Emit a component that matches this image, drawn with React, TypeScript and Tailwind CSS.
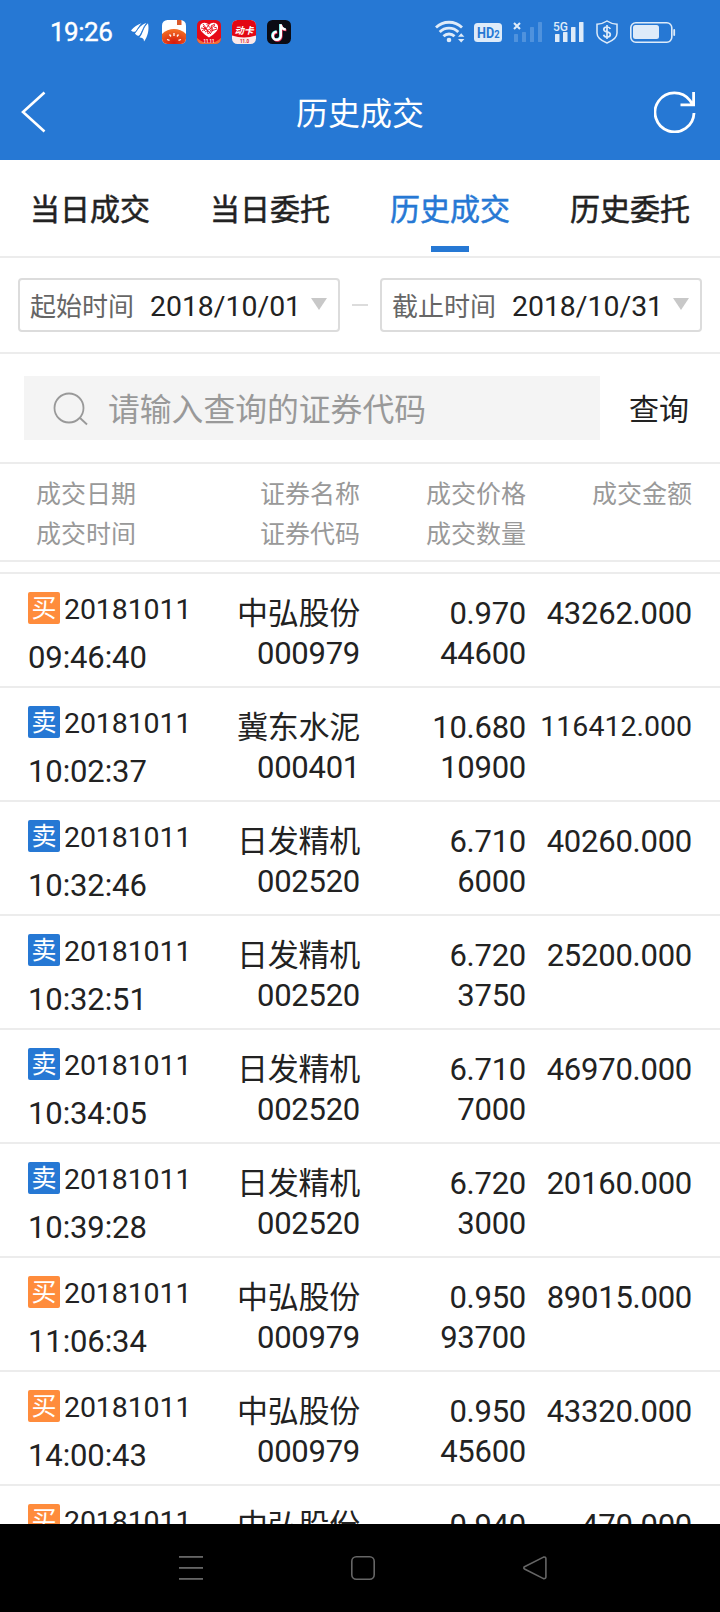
import React from "react";

type Trade = {
  side: "buy" | "sell";
  date: string;
  time: string;
  name: string;
  code: string;
  price: string;
  qty: string;
  amount: string;
};

const trades: Trade[] = [
  { side: "buy", date: "20181011", time: "09:46:40", name: "中弘股份", code: "000979", price: "0.970", qty: "44600", amount: "43262.000" },
  { side: "sell", date: "20181011", time: "10:02:37", name: "冀东水泥", code: "000401", price: "10.680", qty: "10900", amount: "116412.000" },
  { side: "sell", date: "20181011", time: "10:32:46", name: "日发精机", code: "002520", price: "6.710", qty: "6000", amount: "40260.000" },
  { side: "sell", date: "20181011", time: "10:32:51", name: "日发精机", code: "002520", price: "6.720", qty: "3750", amount: "25200.000" },
  { side: "sell", date: "20181011", time: "10:34:05", name: "日发精机", code: "002520", price: "6.710", qty: "7000", amount: "46970.000" },
  { side: "sell", date: "20181011", time: "10:39:28", name: "日发精机", code: "002520", price: "6.720", qty: "3000", amount: "20160.000" },
  { side: "buy", date: "20181011", time: "11:06:34", name: "中弘股份", code: "000979", price: "0.950", qty: "93700", amount: "89015.000" },
  { side: "buy", date: "20181011", time: "14:00:43", name: "中弘股份", code: "000979", price: "0.950", qty: "45600", amount: "43320.000" },
  { side: "buy", date: "20181011", time: "14:01:12", name: "中弘股份", code: "000979", price: "0.940", qty: "500", amount: "470.000" },
];

const tabs = ["当日成交", "当日委托", "历史成交", "历史委托"];

function StatusBar() {
  return (
    <div className="flex h-16 items-center pl-[50px] pr-[44px]">
      <span className="w-[81px] text-[26px] leading-8 tracking-[-0.5px] text-white [-webkit-text-stroke:0.4px_#fff]">19:26</span>
      <svg className="mr-[12px]" width="19" height="24" viewBox="0 0 19 24" fill="#fff">
        <path d="M0 10.500C3 7 6.500 4.500 10.500 3.200C7.500 6.500 6.500 8.500 4.500 11.500C3 12 1.500 12 0 10.500Z" />
        <path d="M4 13.500C7 9 9.500 5 15.500 3C12 7 11 12.500 8 15.800C6.500 15.800 5 15 4 13.500Z" />
        <path d="M8.500 17.500C12 14 12 7.500 17 3.200C18.500 10 16.500 17 13 21.500C13 18.500 11.500 17.500 8.500 17.500Z" />
        <path d="M10.500 3.500L4.300 12.800M15.800 3.200C11.500 7 11.500 13 8.200 16.700" stroke="#2678d4" strokeWidth="0.600" fill="none" />
      </svg>
      <svg className="mr-[11px]" width="24" height="24" viewBox="0 0 24 24">
        <defs>
          <radialGradient id="sun" cx="0.5" cy="0.9" r="0.8">
            <stop offset="0" stopColor="#d6190c" />
            <stop offset="1" stopColor="#f26a23" />
          </radialGradient>
          <clipPath id="app"><rect width="24" height="24" rx="5.500" /></clipPath>
        </defs>
        <g clipPath="url(#app)">
          <rect width="24" height="24" fill="#fff" />
          <rect x="15" width="4.500" height="5" fill="#d95a2b" />
          <path d="M0 24V14C3 10.500 8 9 12 9S21 10.500 24 14V24Z" fill="url(#sun)" />
          <path d="M12 13v3M7.500 14.500l1.500 2M16.500 14.500l-1.500 2M5 19.500l2.500.8M19 19.500l-2.500.8" stroke="#fff" strokeWidth="1.300" />
        </g>
      </svg>
      <svg className="mr-[11px]" width="24" height="24" viewBox="0 0 24 24">
        <g clipPath="url(#app)">
          <rect width="24" height="24" fill="#e60a17" />
          <path d="M0 18C3 21 8 23 12 23S21 21 24 18V24H0Z" fill="#f0703a" />
          <path d="M12 17.500C6 13.500 2.500 10.500 3 6.500C3.500 2.500 9 1.500 12 5C15 1.500 20.500 2.500 21 6.500C21.500 10.500 18 13.500 12 17.500Z" fill="#fff" />
          <path d="M6 4l3 4-4 3M9.500 4l5 5-3 5M18 4l-4 2 2 4-3 4M4 8l6 1 1 5M20 9l-6 2M8 12l5-3 5-4M6 6l8 8M12 5l-5 6M17 7l3 1" stroke="#e60a17" strokeWidth="0.900" fill="none" />
          <text x="12" y="22.800" fontSize="5.500" fontWeight="700" fill="#fff" textAnchor="middle" textLength="11" lengthAdjust="spacingAndGlyphs" fontFamily="Roboto, sans-serif">11.11</text>
        </g>
      </svg>
      <svg className="mr-[11px]" width="24" height="24" viewBox="0 0 24 24">
        <g clipPath="url(#app)">
          <rect width="24" height="24" fill="#fbe9e9" />
          <path d="M0 0H24V15.500C16 18 8 18 0 15.500Z" fill="#e30613" />
          <text x="12" y="13.500" fontSize="9.500" fontWeight="700" fill="#fff" textAnchor="middle" fontStyle="italic" fontFamily="'Noto Sans CJK SC', sans-serif">动卡</text>
          <text x="12.500" y="22.800" fontSize="5.500" fontWeight="700" fill="#d8202a" textAnchor="middle" textLength="9" lengthAdjust="spacingAndGlyphs" fontFamily="Roboto, sans-serif">11.0</text>
        </g>
      </svg>
      <svg width="24" height="24" viewBox="0 0 24 24">
        <rect width="24" height="24" rx="5.500" fill="#0b0b14" />
        <g fill="none" strokeWidth="2.400">
          <path d="M13.200 4v11.500a4 4 0 1 1-4-4M13.200 5c.6 2.500 2.300 4 5 4.100" stroke="#3ee6e0" />
          <path d="M14.400 5v11.500a4 4 0 1 1-4-4M14.400 6c.6 2.500 2.300 4 5 4.100" stroke="#f4335a" />
          <path d="M13.800 4.300v11.500a4 4 0 1 1-4-4M13.800 5.300c.6 2.500 2.300 4 5 4.100" stroke="#fff" />
        </g>
      </svg>

      <svg className="ml-auto mr-[9px]" width="30" height="24" viewBox="0 0 30 24">
        <g fill="none" stroke="#deebf9" strokeWidth="2.800">
          <path d="M1 7.600A18.500 18.500 0 0 1 27 7.600" />
          <path d="M4.700 12.100A13 13 0 0 1 23.300 12.100" />
          <path d="M8.500 16.300A7.700 7.700 0 0 1 19.500 16.300" />
        </g>
        <circle cx="14" cy="20" r="2.300" fill="#deebf9" />
        <path d="M23 16.800L26.200 13.300L29.400 16.800ZM23 19L26.200 22.500L29.400 19Z" fill="#deebf9" />
      </svg>
      <svg className="mr-[11px]" width="28" height="24" viewBox="0 0 28 24">
        <rect y="3" width="28" height="19" rx="3.500" fill="#deebf9" />
        <text x="3" y="18" fontSize="15" fontWeight="700" fill="#2678d4" textLength="22.500" lengthAdjust="spacingAndGlyphs" fontFamily="Roboto, sans-serif">
          HD<tspan fontSize="11">2</tspan>
        </text>
      </svg>
      <svg className="mr-[11px]" width="29" height="24" viewBox="0 0 29 24">
        <path d="M1 3l6 6M7 3l-6 6" stroke="#deebf9" strokeWidth="2.100" />
        <g fill="#4f92dd">
          <rect x="1" y="14" width="4" height="8" rx=".6" />
          <rect x="9" y="12" width="4" height="10" rx=".6" />
          <rect x="17" y="7" width="4" height="15" rx=".6" />
          <rect x="25" y="2" width="4" height="20" rx=".6" />
        </g>
      </svg>
      <svg className="mr-[12px] overflow-visible" width="31" height="24" viewBox="0 0 31 24">
        <text x="0" y="11" fontSize="13.500" fontWeight="500" fill="#deebf9" textLength="15" lengthAdjust="spacingAndGlyphs" fontFamily="Roboto, sans-serif">5G</text>
        <g fill="#deebf9">
          <rect x="2" y="14" width="4.500" height="8" rx=".6" />
          <rect x="10" y="12" width="4.500" height="10" rx=".6" />
          <rect x="18" y="7" width="4.500" height="15" rx=".6" />
          <rect x="26" y="2" width="4.500" height="20" rx=".6" />
        </g>
      </svg>
      <svg className="mr-[12px]" width="22" height="24" viewBox="0 0 22 24">
        <path d="M11 1C8 3 4.500 4 1 4.300V13C1 18 6 21 11 23C16 21 21 18 21 13V4.300C17.500 4 14 3 11 1Z" fill="none" stroke="#deebf9" strokeWidth="1.500" />
        <path d="M14.300 9C13.800 7.600 12.600 7 11 7C9.200 7 7.800 7.800 7.800 9.400C7.800 12.800 14.300 11 14.300 14.500C14.300 16.200 12.800 17 11 17C9.200 17 8 16.200 7.600 14.700M11 5v14" fill="none" stroke="#deebf9" strokeWidth="1.700" />
      </svg>
      <svg width="46" height="24" viewBox="0 0 46 24">
        <rect x=".8" y="2.800" width="41" height="19.400" rx="5" fill="none" stroke="#deebf9" strokeWidth="1.600" />
        <rect x="3" y="5" width="26" height="14" rx="2.500" fill="#deebf9" />
        <rect x="43.300" y="9" width="1.800" height="7" rx=".9" fill="#deebf9" />
      </svg>
    </div>
  );
}

function DateBox({ label, value }: { label: string; value: string }) {
  return (
    <div className="flex h-[54px] w-[322px] items-center rounded-[4px] border-2 border-[#dcdcdc] pl-[10px]">
      <span className="w-[120px] pt-[3px] text-[26px] leading-8 text-[#666]">{label}</span>
      <span className="w-[161px] pt-[3px] text-[28.4px] leading-8 text-[#222]">{value}</span>
      <svg className="-mt-[3px]" width="16" height="12" viewBox="0 0 16 12" fill="#c8c8c8">
        <path d="M0 0H16L8 12Z" />
      </svg>
    </div>
  );
}

function TradeRow({ t }: { t: Trade }) {
  const small = t.amount.length > 9;
  return (
    <div className="flex h-[114px] shrink-0 border-b-2 border-[#ececec] text-[31px] leading-10 tracking-[-0.25px] text-[#222]">
      <div className="w-[200px] pl-7 pt-[18px]">
        <div className="flex h-8 items-center">
          <span
            className={
              t.side === "buy"
                ? "flex size-8 items-center justify-center rounded-[2px] bg-[#ff8c3c] pt-[1px] text-[25px] leading-8 text-white"
                : "flex size-8 items-center justify-center rounded-[2px] bg-[#2678d4] pt-[1px] text-[25px] leading-8 text-white"
            }
          >
            {t.side === "buy" ? "买" : "卖"}
          </span>
          <span className="ml-1 pt-[3px] text-[28.500px] leading-8 tracking-[-0.1px]">{t.date}</span>
        </div>
        <div className="pt-[14px] tracking-[-0.1px]">{t.time}</div>
      </div>
      <div className="w-[160px] pt-[20px] text-right">
        <div className="h-10">{t.name}</div>
        <div>{t.code}</div>
      </div>
      <div className="w-[166px] pt-[20px] text-right">
        <div>{t.price}</div>
        <div>{t.qty}</div>
      </div>
      <div className={small ? "w-[166px] pt-[19px] text-right text-[28.5px] tracking-normal" : "w-[166px] pt-[20px] text-right"}>{t.amount}</div>
    </div>
  );
}

export default function App() {
  return (
    <div className="flex h-[1612px] w-[720px] flex-col overflow-hidden bg-white font-[Roboto,'Noto_Sans_CJK_SC',sans-serif]">
      <header className="h-40 shrink-0 bg-[#2678d4]">
        <StatusBar />
        <div className="flex h-24 items-center justify-between pl-[21px] pr-[24px]">
          <svg width="42" height="42" viewBox="0 0 42 42" fill="none" stroke="#fff" strokeWidth="2.600">
            <path d="M23.500 1.500L2 21L23.500 40.500" />
          </svg>
          <h1 className="pl-[3px] pt-[4px] text-[32px] leading-10 text-white">历史成交</h1>
          <svg width="42" height="42" viewBox="0 0 42 42" fill="none" stroke="#fff" strokeWidth="2.800">
            <path d="M40 22A19.500 19.500 0 1 1 36 9.500L39 14M39.600 1V13.900H26.500" />
          </svg>
        </div>
      </header>

      <nav className="grid h-[98px] shrink-0 grid-cols-4 border-b-2 border-[#ececec]">
        {tabs.map((tab) => (
          <div
            key={tab}
            className={
              tab === "历史成交"
                ? "flex flex-col items-center pt-[30px] text-[30px] leading-10 text-[#2678d4] [-webkit-text-stroke:0.5px]"
                : "flex flex-col items-center pt-[30px] text-[30px] leading-10 text-[#222] [-webkit-text-stroke:0.5px]"
            }
          >
            {tab}
            {tab === "历史成交" && <span className="mt-[16px] h-[6px] w-[38px] bg-[#2678d4]" />}
          </div>
        ))}
      </nav>

      <section className="flex h-24 shrink-0 items-center justify-between border-b-2 border-[#ececec] px-[18px]">
        <DateBox label="起始时间" value="2018/10/01" />
        <span className="h-[2px] w-4 bg-[#dcdcdc]" />
        <DateBox label="截止时间" value="2018/10/31" />
      </section>

      <section className="flex h-[110px] shrink-0 items-center border-b-2 border-[#ececec] pl-6">
        <div className="flex h-16 w-[576px] items-center bg-[#f4f4f4] pl-[29px]">
          <svg width="36" height="36" viewBox="0 0 36 36" fill="none" stroke="#999" strokeWidth="1.800">
            <circle cx="16" cy="18" r="14.500" />
            <path d="M26.500 27.500L34 34.500" />
          </svg>
          <span className="ml-[19px] pt-[3px] text-[31.8px] leading-10 text-[#999]">请输入查询的证券代码</span>
        </div>
        <button className="ml-[29px] pt-[4px] text-[30px] leading-10 text-[#222]">查询</button>
      </section>

      <section className="flex h-[98px] shrink-0 border-b-2 border-[#ececec] pt-[11px] text-[25px] leading-10 text-[#999]">
        <div className="w-[200px] pl-9">
          <div>成交日期</div>
          <div>成交时间</div>
        </div>
        <div className="w-[160px] text-right">
          <div>证券名称</div>
          <div>证券代码</div>
        </div>
        <div className="w-[166px] text-right">
          <div>成交价格</div>
          <div>成交数量</div>
        </div>
        <div className="w-[166px] text-right">成交金额</div>
      </section>

      <div className="h-3 shrink-0 border-b-2 border-[#ececec]" />

      <main className="flex min-h-0 flex-1 flex-col overflow-hidden">
        {trades.map((t) => (
          <TradeRow key={t.time} t={t} />
        ))}
      </main>

      <footer className="flex h-[88px] shrink-0 items-center bg-black pl-[179px]">
        <svg width="24" height="24" viewBox="0 0 24 24" fill="#666">
          <rect width="24" height="1.800" />
          <rect y="11" width="24" height="1.800" />
          <rect y="22" width="24" height="1.800" />
        </svg>
        <svg className="ml-[148px]" width="24" height="24" viewBox="0 0 24 24" fill="none" stroke="#666" strokeWidth="1.600">
          <rect x=".8" y=".8" width="22.400" height="22.400" rx="4.500" />
        </svg>
        <svg className="ml-[148px]" width="24" height="24" viewBox="0 0 24 24" fill="none" stroke="#666" strokeWidth="1.600" strokeLinejoin="round">
          <path d="M1.500 10.700L20.500 1.100Q22.700 .8 22.900 2.500V21.200Q22.700 22.900 20.500 22.600L1.500 13Q.2 11.900 1.500 10.700Z" />
        </svg>
      </footer>
    </div>
  );
}
